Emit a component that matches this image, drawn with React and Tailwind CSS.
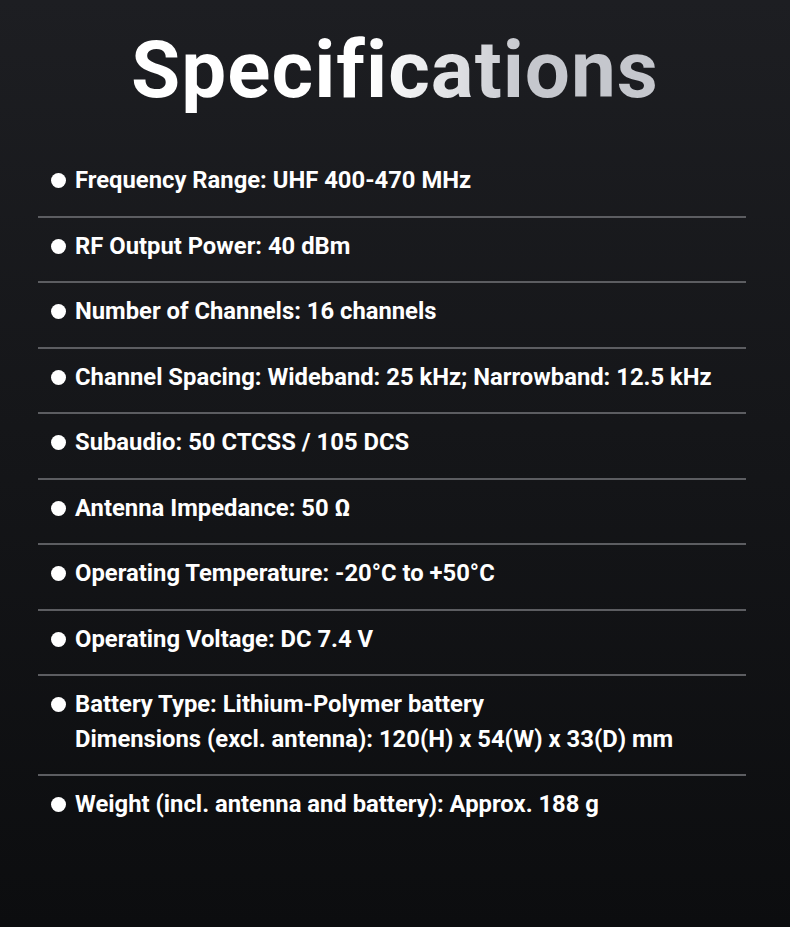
const specs = [
  ['Frequency Range: UHF 400-470 MHz'],
  ['RF Output Power: 40 dBm'],
  ['Number of Channels: 16 channels'],
  ['Channel Spacing: Wideband: 25 kHz; Narrowband: 12.5 kHz'],
  ['Subaudio: 50 CTCSS / 105 DCS'],
  ['Antenna Impedance: 50 Ω'],
  ['Operating Temperature: -20°C to +50°C'],
  ['Operating Voltage: DC 7.4 V'],
  ['Battery Type: Lithium-Polymer battery', 'Dimensions (excl. antenna): 120(H) x 54(W) x 33(D) mm'],
  ['Weight (incl. antenna and battery): Approx. 188 g'],
];

export default function App() {
  return (
    <div
      className="min-h-[927px] w-full bg-gradient-to-b from-[#1d1e22] to-[#0c0d0f] text-white"
      style={{ fontFamily: 'Roboto, "Liberation Sans", sans-serif' }}
    >
      <h1 className="pt-[22px] text-center text-[80px] font-bold leading-[96px] tracking-[1px]">
        <span className="bg-gradient-to-r from-white from-[45%] to-[#c5c7cd] to-[75%] bg-clip-text text-transparent">
          Specifications
        </span>
      </h1>

      <ul className="mt-[34px] ml-[38px] w-[708px]">
        {specs.map((lines, i) => (
          <li
            key={i}
            className={
              'flex items-start gap-[9px] pl-[13px] pt-[12px] pb-[18.5px] ' +
              (i < specs.length - 1 ? 'border-b-2 border-[#5c5d61]' : '')
            }
          >
            <span className="mt-[9px] h-[15px] w-[15px] shrink-0 rounded-full bg-white" />
            <div className="text-[23.8px] font-bold leading-[33px]">
              {lines.map((l, j) => (
                <div key={j} className={j > 0 ? 'mt-[1.5px]' : ''}>{l}</div>
              ))}
            </div>
          </li>
        ))}
      </ul>
    </div>
  );
}
